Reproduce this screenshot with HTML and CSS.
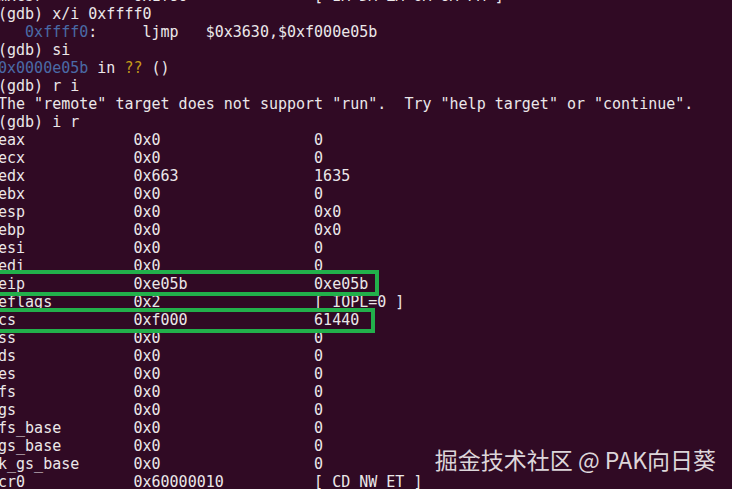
FILE: index.html
```html
<!DOCTYPE html>
<html>
<head>
<meta charset="utf-8">
<link rel="stylesheet" href="styles.css">
</head>
<body>
<div class="term">
<pre class="out">mxcsr          0x1f80              [ IM DM ZM OM UM PM ]
(gdb) x/i 0xffff0
   <span class="addr">0xffff0</span>:     ljmp   $0x3630,$0xf000e05b
(gdb) si
<span class="addr">0x0000e05b</span> in <span class="q">??</span> ()
(gdb) r i
The "remote" target does not support "run".  Try "help target" or "continue".
(gdb) i r
eax            0x0                 0
ecx            0x0                 0
edx            0x663               1635
ebx            0x0                 0
esp            0x0                 0x0
ebp            0x0                 0x0
esi            0x0                 0
edi            0x0                 0
eip            0xe05b              0xe05b
eflags         0x2                 [ IOPL=0 ]
cs             0xf000              61440
ss             0x0                 0
ds             0x0                 0
es             0x0                 0
fs             0x0                 0
gs             0x0                 0
fs_base        0x0                 0
gs_base        0x0                 0
k_gs_base      0x0                 0
cr0            0x60000010          [ CD NW ET ]</pre>
<div class="mark mark-eip"></div>
<div class="mark mark-cs"></div>
<div class="watermark">掘金技术社区 @ PAK向日葵</div>
</div>
</body>
</html>
```
FILE: styles.css
```css
html, body {
  margin: 0;
  padding: 0;
  background: #300a24;
  overflow: hidden;
}
.term {
  position: relative;
  width: 732px;
  height: 489px;
  overflow: hidden;
  background: #300a24;
}
.out {
  margin: -13px 0 0 -2px;
  font-family: "DejaVu Sans Mono", monospace;
  font-size: 15px;
  line-height: 18px;
  color: #ebe7e9;
  white-space: pre;
}
.addr { color: #4a6aa6; }
.q { color: #c49a1a; }
.mark {
  position: absolute;
  border: 4px solid #22b04b;
  box-sizing: border-box;
}
.mark-eip {
  left: -10px;
  top: 270px;
  width: 389px;
  height: 26px;
}
.mark-cs {
  left: -10px;
  top: 308px;
  width: 385px;
  height: 25px;
}
.watermark {
  position: absolute;
  right: 16px;
  top: 443px;
  font-family: "Noto Sans CJK SC", "Noto Sans", sans-serif;
  font-size: 23px;
  line-height: 32px;
  color: #ddd6da;
  white-space: nowrap;
}
```
